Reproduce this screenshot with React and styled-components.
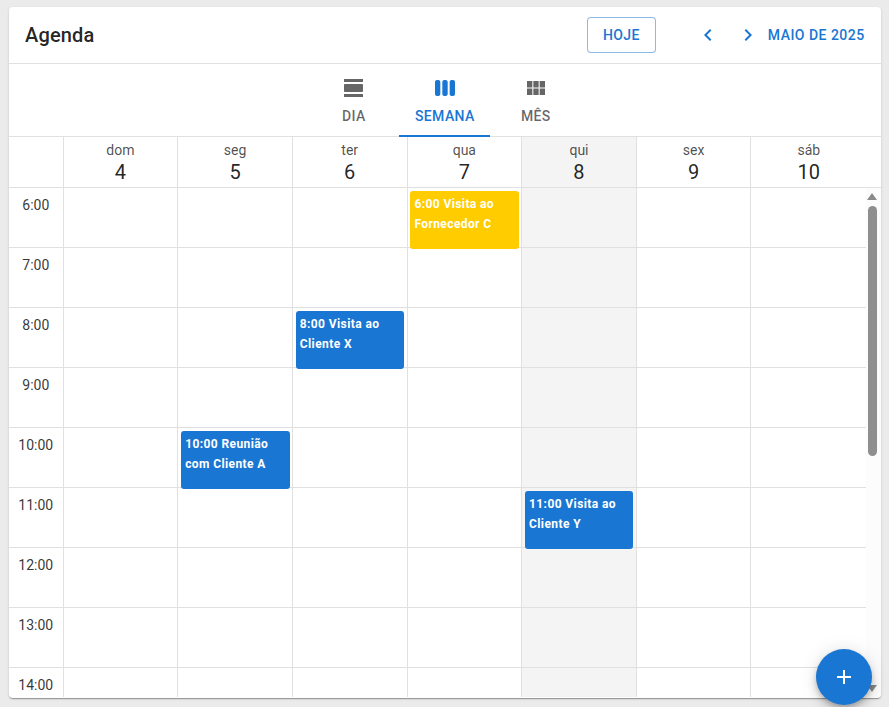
import React from "react";
import styled, { createGlobalStyle } from "styled-components";

const Global = createGlobalStyle`
  html, body { margin: 0; padding: 0; height: 100%; background: #ebebeb; overflow: hidden; }
  body { font-family: Roboto, "Liberation Sans", sans-serif; }
  * { box-sizing: border-box; }
`;

const Page = styled.div`
  width: 889px;
  height: 707px;
  padding: 7px 8.33px 9px 9px;
  position: relative;
`;

const Paper = styled.main`
  height: 691px;
  background: #fff;
  border-radius: 4px;
  display: flex;
  flex-direction: column;
  box-shadow: 0 2px 1px -1px rgba(0,0,0,.2), 0 1px 1px 0 rgba(0,0,0,.14), 0 1px 3px 0 rgba(0,0,0,.12);
`;

const Toolbar = styled.header`
  height: 57px;
  flex: none;
  display: flex;
  align-items: center;
  padding: 0 16px;
  border-bottom: 1px solid #e0e0e0;
`;

const Title = styled.h1`
  margin: 0;
  flex: 1;
  font-size: 20px;
  font-weight: 500;
  letter-spacing: .15px;
  line-height: 56px;
  color: rgba(0,0,0,.87);
`;

const TodayButton = styled.button`
  width: 69px;
  height: 36px;
  margin-right: 32px;
  border: 1px solid rgba(25,118,210,.5);
  border-radius: 4px;
  background: #fff;
  color: #1976d2;
  font: 500 14px Roboto, sans-serif;
  letter-spacing: .4px;
`;

const NavButton = styled.span`
  width: 40px;
  height: 40px;
  display: flex;
  align-items: center;
  justify-content: center;
  color: #1976d2;
`;

const MonthLabel = styled.span`
  font-size: 14px;
  font-weight: 500;
  letter-spacing: .48px;
  color: #1976d2;
  white-space: nowrap;
`;

const Tabs = styled.nav`
  height: 73px;
  flex: none;
  display: flex;
  justify-content: center;
  border-bottom: 1px solid #e0e0e0;
`;

const Tab = styled.div`
  width: 91px;
  height: 73px;
  margin-bottom: -1px;
  padding-top: 12px;
  display: flex;
  flex-direction: column;
  align-items: center;
  gap: 6px;
  font-size: 14px;
  font-weight: 500;
  letter-spacing: .4px;
  line-height: 20px;
  color: ${p => (p.$active ? "#1976d2" : "rgba(0,0,0,.6)")};
  border-bottom: 2px solid ${p => (p.$active ? "#1976d2" : "transparent")};
`;

const Icon = styled.svg`
  width: ${p => p.$size || 24}px;
  height: ${p => p.$size || 24}px;
  fill: ${p => p.$color || "currentColor"};
  display: block;
`;

const HeadRow = styled.div`
  height: 51px;
  flex: none;
  display: grid;
  grid-template-columns: 54.6px repeat(7, 1fr);
  padding-right: 14.6px;
  border-bottom: 1px solid #e0e0e0;
`;

const Corner = styled.div`
  border-right: 1px solid #e0e0e0;
`;

const DayHead = styled.div`
  padding-top: 5px;
  display: flex;
  flex-direction: column;
  align-items: center;
  border-right: ${p => (p.$last ? "none" : "1px solid #e0e0e0")};
  background: ${p => (p.$today ? "#f4f4f4" : "#fff")};
  color: rgba(0,0,0,.87);
`;

const DayName = styled.span`
  font-size: 14px;
  line-height: 16px;
  margin-bottom: 1px;
  color: rgba(0,0,0,.7);
`;

const DayNumber = styled.span`
  font-size: 20px;
  line-height: 26px;
`;

const Body = styled.div`
  flex: 1;
  min-height: 0;
  display: flex;
  overflow: hidden;
  padding-bottom: 1px;
`;

const Rows = styled.div`
  flex: 1;
  min-width: 0;
  overflow: hidden;
`;

const Row = styled.div`
  height: 60px;
  display: grid;
  grid-template-columns: 54.6px repeat(7, 1fr);
  grid-template-rows: minmax(0, 1fr);
  border-bottom: 1px solid #e0e0e0;
`;

const TimeCell = styled.div`
  border-right: 1px solid #e0e0e0;
  padding-top: 7px;
  text-align: center;
  font-size: 14px;
  line-height: 20px;
  color: rgba(0,0,0,.8);
`;

const Cell = styled.div`
  border-right: ${p => (p.$last ? "none" : "1px solid #e0e0e0")};
  background: ${p => (p.$today ? "#f4f4f4" : "#fff")};
  padding: 3px 2.35px 0 2.9px;
  min-width: 0;
`;

const Event = styled.div`
  position: relative;
  z-index: 1;
  height: 58px;
  border-radius: 3px;
  padding: 3px 4px;
  background: ${p => p.$color};
  color: #fff;
  font-size: 12px;
  font-weight: 700;
  line-height: 20px;
  letter-spacing: .4px;
`;

const ScrollTrack = styled.div`
  width: 14.6px;
  flex: none;
  display: flex;
  flex-direction: column;
  align-items: center;
  padding-right: 2px;
  background: #fcfcfc;
  border-bottom-right-radius: 4px;
`;

const Arrow = styled.div`
  width: 0;
  height: 0;
  flex: none;
  border-left: 5px solid transparent;
  border-right: 5px solid transparent;
  ${p => p.$down
    ? "border-top: 7px solid #8a8a8a; margin-top: auto; margin-bottom: 5px;"
    : "border-bottom: 7px solid #8a8a8a; margin-top: 5px;"}
`;

const Thumb = styled.div`
  width: 9px;
  height: 250px;
  margin-top: 6px;
  border-radius: 5px;
  background: #8f8f8f;
`;

const Fab = styled.button`
  position: absolute;
  z-index: 2;
  left: 816px;
  top: 649px;
  width: 56px;
  height: 56px;
  border: none;
  border-radius: 50%;
  background: #1976d2;
  display: flex;
  align-items: center;
  justify-content: center;
  box-shadow: 0 3px 5px -1px rgba(0,0,0,.2), 0 6px 10px 0 rgba(0,0,0,.14), 0 1px 18px 0 rgba(0,0,0,.12);
`;

const days = [
  ["dom", 4], ["seg", 5], ["ter", 6], ["qua", 7], ["qui", 8], ["sex", 9], ["sáb", 10],
];
const hours = [6, 7, 8, 9, 10, 11, 12, 13, 14];
const BLUE = "#1976d2";
const events = {
  "6-3": { color: "#ffcc00", lines: ["6:00 Visita ao", "Fornecedor C"] },
  "8-2": { color: BLUE, lines: ["8:00 Visita ao", "Cliente X"] },
  "10-1": { color: BLUE, lines: ["10:00 Reunião", "com Cliente A"] },
  "11-4": { color: BLUE, lines: ["11:00 Visita ao", "Cliente Y"] },
};

const P = {
  day: "M2 21h19v-3H2v3zM20 8H3c-.55 0-1 .45-1 1v6c0 .55.45 1 1 1h17c.55 0 1-.45 1-1V9c0-.55-.45-1-1-1zM2 3v3h19V3H2z",
  week: "M5.33 20H4c-1.1 0-2-.9-2-2V6c0-1.1.9-2 2-2h1.33c1.1 0 2 .9 2 2v12c0 1.1-.9 2-2 2zM22 18V6c0-1.1-.9-2-2-2h-1.33c-1.1 0-2 .9-2 2v12c0 1.1.9 2 2 2H20c1.1 0 2-.9 2-2zm-7.33 0V6c0-1.1-.9-2-2-2h-1.33c-1.1 0-2 .9-2 2v12c0 1.1.9 2 2 2h1.33c1.1 0 2-.9 2-2z",
  month: "M3 5h5.33v6.5H3zM9.33 5h5.34v6.5H9.33zM15.67 5H21v6.5h-5.33zM3 12.5h5.33V19H3zM9.33 12.5h5.34V19H9.33zM15.67 12.5H21V19h-5.33z",
  left: "M15.41 7.41 14 6l-6 6 6 6 1.41-1.41L10.83 12z",
  right: "M10 6 8.59 7.41 13.17 12l-4.58 4.59L10 18l6-6z",
  add: "M19 13h-6v6h-2v-6H5v-2h6V5h2v6h6v2z",
};

const Glyph = ({ d, size, color }) => (
  <Icon viewBox="0 0 24 24" $size={size} $color={color}><path d={d} /></Icon>
);

export default function App() {
  return (
    <Page>
      <Global />
      <Paper>
        <Toolbar>
          <Title>Agenda</Title>
          <TodayButton>HOJE</TodayButton>
          <NavButton><Glyph d={P.left} /></NavButton>
          <NavButton><Glyph d={P.right} /></NavButton>
          <MonthLabel>MAIO DE 2025</MonthLabel>
        </Toolbar>
        <Tabs>
          <Tab><Glyph d={P.day} />DIA</Tab>
          <Tab $active><Glyph d={P.week} />SEMANA</Tab>
          <Tab><Glyph d={P.month} />MÊS</Tab>
        </Tabs>
        <HeadRow>
          <Corner />
          {days.map(([n, d], i) => (
            <DayHead key={n} $today={i === 4} $last={i === 6}>
              <DayName>{n}</DayName>
              <DayNumber>{d}</DayNumber>
            </DayHead>
          ))}
        </HeadRow>
        <Body>
          <Rows>
            {hours.map(h => (
              <Row key={h}>
                <TimeCell>{h}:00</TimeCell>
                {days.map(([n], i) => {
                  const ev = events[`${h}-${i}`];
                  return (
                    <Cell key={n} $today={i === 4} $last={i === 6}>
                      {ev && (
                        <Event $color={ev.color}>
                          {ev.lines[0]}<br />{ev.lines[1]}
                        </Event>
                      )}
                    </Cell>
                  );
                })}
              </Row>
            ))}
          </Rows>
          <ScrollTrack>
            <Arrow />
            <Thumb />
            <Arrow $down />
          </ScrollTrack>
        </Body>
      </Paper>
      <Fab aria-label="Adicionar"><Glyph d={P.add} color="#fff" /></Fab>
    </Page>
  );
}
